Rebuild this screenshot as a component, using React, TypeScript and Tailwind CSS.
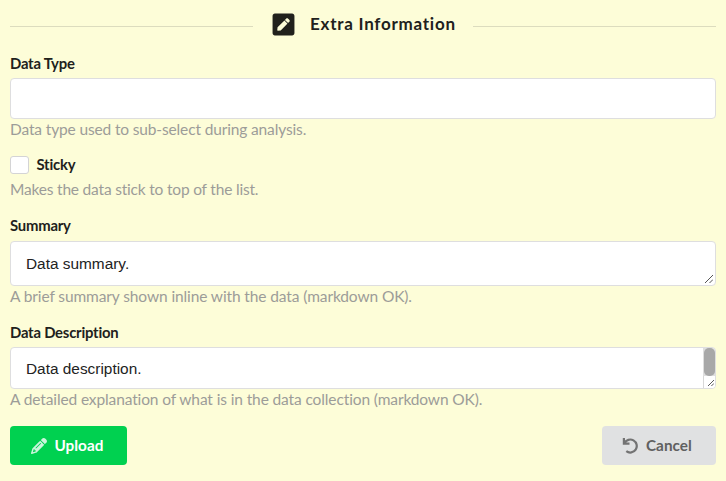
import React from "react";
import { FaPenSquare } from "react-icons/fa";
import { FaPencil } from "react-icons/fa6";

const label = "block text-[14.86px] leading-[18px] font-bold tracking-[-0.22px] text-[#21211c]";
const hint = "text-[15.5px] leading-[20px] text-[#9c9c98]";
const box = "rounded-[4px] border border-[#dededf] bg-white";
const field = "relative flex items-center px-[15px] font-[Liberation_Sans,sans-serif] text-[15.4px] text-[#222]";

function Grip({ small = false }: { small?: boolean }) {
  return (
    <svg
      className={small ? "mt-[2px] ml-[2px] h-[6px] w-[6px]" : "absolute right-[2px] bottom-[2px] h-[8px] w-[8px]"}
      viewBox="0 0 8 8"
      stroke="#555"
      strokeWidth={small ? 1.3 : 1}
    >
      <path d="M0 8L8 0M4.5 8L8 4.5" />
    </svg>
  );
}

export default function App() {
  return (
    <div className="flex h-[481px] w-[726px] flex-col bg-[#fdfdd8] px-[10px] font-[Lato,sans-serif] [font-variant-ligatures:none]">
      <div className="flex h-[49px] items-center">
        <div className="mt-[3px] h-px w-[243px] bg-[#dcdcbe]" />
        <FaPenSquare className="ml-[18px] h-[25px] w-[25px] text-[#21211c]" />
        <span className="mb-[2px] ml-[14px] w-[147px] text-[17px] font-bold tracking-[0.75px] whitespace-nowrap text-[#21211c]">Extra Information</span>
        <div className="mt-[3px] ml-[16px] h-px flex-1 bg-[#dcdcbe]" />
      </div>
      <label className={`mt-[5px] ${label}`}>Data Type</label>
      <div className={`mt-[6px] h-[41px] ${box}`} />
      <p className={`${hint} tracking-[-0.14px]`}>Data type used to sub-select during analysis.</p>
      <div className="mt-[16px] flex h-[18px] items-center">
        <div className="mt-[2px] h-[18px] w-[19px] rounded-[3px] border border-[#d4d4d5] bg-white" />
        <span className={`ml-[7.5px] ${label}`}>Sticky</span>
      </div>
      <p className={`mt-[6px] ${hint} tracking-[-0.19px]`}>Makes the data stick to top of the list.</p>
      <label className={`mt-[17px] ${label}`}>Summary</label>
      <div className={`mt-[7px] h-[45px] ${field} ${box}`}>
        Data summary.
        <Grip />
      </div>
      <p className={`${hint} tracking-[-0.11px]`}>A brief summary shown inline with the data (markdown OK).</p>
      <label className={`mt-[17px] ${label}`}>Data Description</label>
      <div className={`mt-[6px] h-[42px] overflow-hidden pt-[2px] ${field} ${box}`}>
        Data description.
        <div className="absolute top-0 right-0 h-[28px] w-[12px] bg-[#dedede]">
          <div className="ml-auto h-full w-[11px] rounded-[5px] bg-[#a8a8a8]" />
        </div>
        <div className="absolute right-0 bottom-0 flex h-[12px] w-[12px] items-center justify-center border-l border-[#d8d8d8] bg-white">
          <Grip small />
        </div>
      </div>
      <p className={`${hint} tracking-[-0.12px]`}>A detailed explanation of what is in the data collection (markdown OK).</p>
      <div className="mt-[17px] flex justify-between">
        <button className="flex h-[39px] w-[117px] items-center rounded-[4px] bg-[#00d150] pl-[21px] text-[15.3px] font-bold text-white">
          <FaPencil className="mr-[7.5px] h-[16px] w-[16px] opacity-80" />Upload
        </button>
        <button className="flex h-[39px] w-[114px] items-center rounded-[4px] bg-[#e0e1e2] pl-[20px] text-[15.3px] font-bold text-[#606060]">
          <svg className="mr-[8px] h-[16px] w-[16px] opacity-85" viewBox="0 0 16 16" fill="none" stroke="currentColor" strokeWidth="2.2">
            <path d="M1.9 0V5.7H7.5M2.4 5.2A6.5 6.5 0 1 1 4.3 13.2" />
          </svg>
          Cancel
        </button>
      </div>
    </div>
  );
}
